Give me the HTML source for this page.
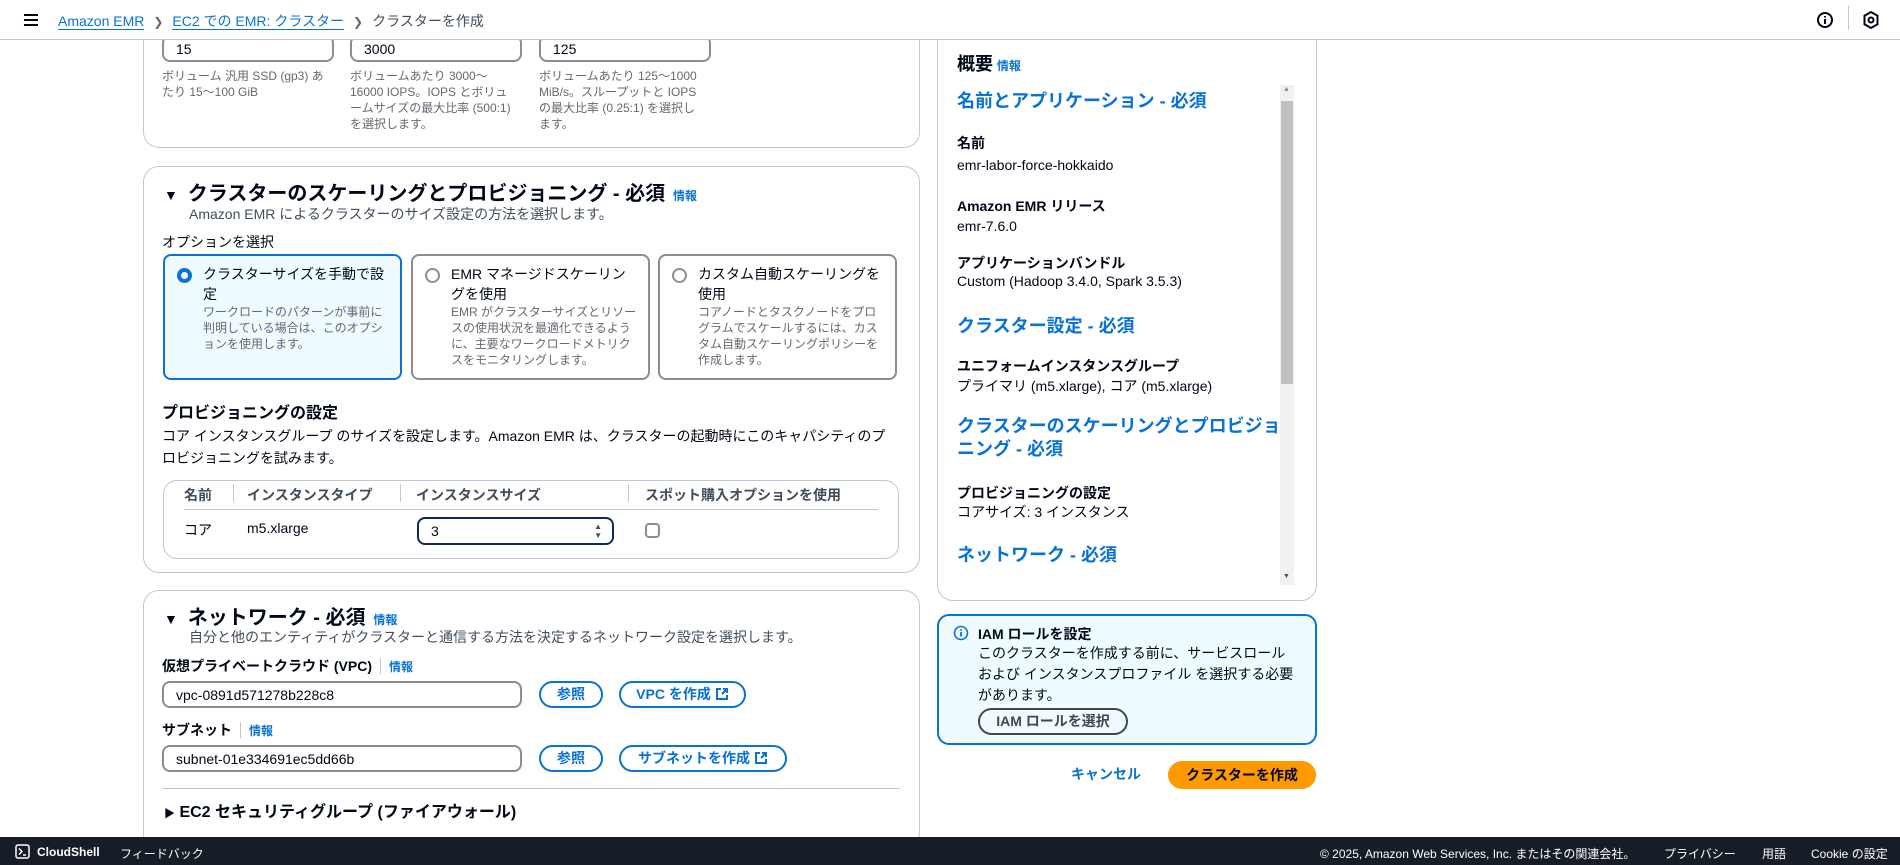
<!DOCTYPE html>
<html><head><meta charset="utf-8"><style>
*{box-sizing:border-box;margin:0;padding:0}
body{width:1900px;height:865px;overflow:hidden;background:#fff;font-family:"Liberation Sans","Noto Sans CJK JP",sans-serif;color:#000716;font-size:14px;position:relative}
.a{position:absolute;white-space:nowrap}
.blue{color:#0972d3}
.card{position:absolute;border:1px solid #c6c6cd;border-radius:16px;background:#fff}
.inp{position:absolute;border:2px solid #8c8c94;border-radius:8px;height:27px;padding:2px 12px;font-size:14px;line-height:20px}
.help{position:absolute;font-size:12px;line-height:16px;color:#656871;white-space:normal}
.h2{font-size:20px;font-weight:bold}
.info{font-size:12px;color:#0972d3;font-weight:bold}
.tile{position:absolute;top:254px;height:126px;border:2px solid #8c8c94;border-radius:8px;padding:8px 10px 0 38px;width:239px}
.tile .t{font-size:14px;line-height:20px}
.tile .d{font-size:12px;line-height:16px;color:#656871}
.radio{position:absolute;left:12px;top:12px;width:15px;height:15px;border:2px solid #8c8c94;border-radius:50%}
.btn{position:absolute;border:2px solid #0972d3;border-radius:20px;color:#0972d3;font-weight:bold;font-size:14px;height:27px;line-height:23px;text-align:center}
.sl{font-size:14px;font-weight:bold}
.sv{font-size:14px}
.sh{font-size:18px;font-weight:bold;color:#0972d3}
.ext{display:inline-block;vertical-align:-2px;margin-left:4px}
</style></head><body>
<div class="a" style="left:0;top:0;width:1900px;height:40px;border-bottom:1px solid #c6c6cd;background:#fff;z-index:5">
<div class="a" style="left:24px;top:14px;width:14px;height:2px;background:#000716;box-shadow:0 5px 0 #000716,0 10px 0 #000716"></div>
<div class="a" style="left:58px;top:11px;font-size:14px"><span class="blue" style="border-bottom:1px solid #0972d3">Amazon EMR</span><span style="color:#656871;margin:0 9px;font-size:12px">&#x276F;</span><span class="blue" style="border-bottom:1px solid #0972d3">EC2 での EMR: クラスター</span><span style="color:#656871;margin:0 9px;font-size:12px">&#x276F;</span><span style="color:#414d5c">クラスターを作成</span></div>
<svg class="a" style="left:1816px;top:11px" width="18" height="18" viewBox="0 0 18 18"><circle cx="9" cy="9" r="7" fill="none" stroke="#000716" stroke-width="2"/><path d="M9 8v5M9 5v1.5" stroke="#000716" stroke-width="2"/></svg>
<div class="a" style="left:1848px;top:6px;width:1px;height:24px;background:#c6c6cd"></div>
<svg class="a" style="left:1862px;top:10px" width="18" height="20" viewBox="0 0 18 20"><path d="M9 2l6.5 3.7v8.6L9 18l-6.5-3.7V5.7z" fill="none" stroke="#000716" stroke-width="2"/><circle cx="9" cy="10" r="2.5" fill="none" stroke="#000716" stroke-width="2"/></svg>
</div>

<div class="card" style="left:143px;top:0;width:777px;height:148px;border-top:none;border-radius:0 0 16px 16px"></div>
<div class="inp" style="left:162px;top:35px;width:172px">15</div>
<div class="inp" style="left:350px;top:35px;width:172px">3000</div>
<div class="inp" style="left:539px;top:35px;width:172px">125</div>
<div class="help" style="left:162px;top:68px;width:170px">ボリューム 汎用 SSD (gp3) あたり 15〜100 GiB</div>
<div class="help" style="left:350px;top:68px;width:166px">ボリュームあたり 3000〜<br>16000 IOPS。IOPS とボリュームサイズの最大比率 (500:1) を選択します。</div>
<div class="help" style="left:539px;top:68px;width:166px">ボリュームあたり 125〜1000 MiB/s。スループットと IOPS の最大比率 (0.25:1) を選択します。</div>

<div class="card" style="left:143px;top:166px;width:777px;height:407px"></div>
<div class="a" style="left:164px;top:177px"><span style="font-size:14px">&#9660;</span> <span class="h2" style="margin-left:6px">クラスターのスケーリングとプロビジョニング - 必須</span> <span class="info" style="margin-left:4px">情報</span></div>
<div class="a" style="left:189px;top:204px;font-size:14px;color:#414d5c">Amazon EMR によるクラスターのサイズ設定の方法を選択します。</div>
<div class="a" style="left:162px;top:232px;font-size:14px">オプションを選択</div>
<div class="tile" style="left:163px;border-color:#0972d3;background:#f0fbff"><div class="radio" style="border:4px solid #0972d3;background:#fff"></div><div class="t">クラスターサイズを手動で設定</div><div class="d">ワークロードのパターンが事前に判明している場合は、このオプションを使用します。</div></div>
<div class="tile" style="left:411px"><div class="radio"></div><div class="t">EMR マネージドスケーリングを使用</div><div class="d">EMR がクラスターサイズとリソースの使用状況を最適化できるように、主要なワークロードメトリクスをモニタリングします。</div></div>
<div class="tile" style="left:658px"><div class="radio"></div><div class="t">カスタム自動スケーリングを使用</div><div class="d">コアノードとタスクノードをプログラムでスケールするには、カスタム自動スケーリングポリシーを作成します。</div></div>
<div class="a" style="left:162px;top:399px;font-size:16px;font-weight:bold">プロビジョニングの設定</div>
<div class="a" style="left:162px;top:425px;font-size:14px;line-height:22px;white-space:normal;width:735px">コア インスタンスグループ のサイズを設定します。Amazon EMR は、クラスターの起動時にこのキャパシティのプロビジョニングを試みます。</div>
<div class="card" style="left:163px;top:480px;width:736px;height:79px;border-radius:14px"></div>
<div class="a" style="left:184px;top:485px;font-size:14px;font-weight:bold;color:#414d5c">名前</div>
<div class="a" style="left:233px;top:484px;width:1px;height:18px;background:#c6c6cd"></div>
<div class="a" style="left:247px;top:485px;font-size:14px;font-weight:bold;color:#414d5c">インスタンスタイプ</div>
<div class="a" style="left:400px;top:484px;width:1px;height:18px;background:#c6c6cd"></div>
<div class="a" style="left:416px;top:485px;font-size:14px;font-weight:bold;color:#414d5c">インスタンスサイズ</div>
<div class="a" style="left:628px;top:484px;width:1px;height:18px;background:#c6c6cd"></div>
<div class="a" style="left:645px;top:485px;font-size:14px;font-weight:bold;color:#414d5c">スポット購入オプションを使用</div>
<div class="a" style="left:184px;top:509px;width:694px;height:1px;background:#c6c6cd"></div>
<div class="a" style="left:184px;top:520px">コア</div>
<div class="a" style="left:247px;top:520px">m5.xlarge</div>
<div class="inp" style="left:417px;top:517px;width:197px;border-color:#0f2a55;border-width:2px;height:28px">3<span style="position:absolute;right:10px;top:3px;font-size:8px;line-height:9px;color:#414d5c">▲<br>▼</span></div>
<div class="a" style="left:645px;top:523px;width:15px;height:15px;border:2px solid #8c8c94;border-radius:4px"></div>

<div class="card" style="left:143px;top:590px;width:777px;height:260px"></div>
<div class="a" style="left:164px;top:601px"><span style="font-size:14px">&#9660;</span> <span class="h2" style="margin-left:6px">ネットワーク - 必須</span> <span class="info" style="margin-left:4px">情報</span></div>
<div class="a" style="left:189px;top:627px;color:#414d5c">自分と他のエンティティがクラスターと通信する方法を決定するネットワーク設定を選択します。</div>
<div class="a" style="left:162px;top:656px;font-weight:bold">仮想プライベートクラウド (VPC)<span style="display:inline-block;width:1px;height:16px;background:#c6c6cd;margin:0 8px;vertical-align:-3px"></span><span class="info">情報</span></div>
<div class="inp" style="left:162px;top:681px;width:360px">vpc-0891d571278b228c8</div>
<div class="btn" style="left:539px;top:681px;width:64px">参照</div>
<div class="btn" style="left:619px;top:681px;width:127px">VPC を作成<svg class="ext" width="14" height="14" viewBox="0 0 14 14"><path d="M6 2H2v10h10V8M8 2h4v4M12 2L7 7" fill="none" stroke="#0972d3" stroke-width="2"/></svg></div>
<div class="a" style="left:162px;top:720px;font-weight:bold">サブネット<span style="display:inline-block;width:1px;height:16px;background:#c6c6cd;margin:0 8px;vertical-align:-3px"></span><span class="info">情報</span></div>
<div class="inp" style="left:162px;top:745px;width:360px">subnet-01e334691ec5dd66b</div>
<div class="btn" style="left:539px;top:745px;width:64px">参照</div>
<div class="btn" style="left:619px;top:745px;width:168px">サブネットを作成<svg class="ext" width="14" height="14" viewBox="0 0 14 14"><path d="M6 2H2v10h10V8M8 2h4v4M12 2L7 7" fill="none" stroke="#0972d3" stroke-width="2"/></svg></div>
<div class="a" style="left:162px;top:788px;width:738px;height:1px;background:#c6c6cd"></div>
<div class="a" style="left:164px;top:798px;font-weight:bold;font-size:16px"><span style="font-size:11px">&#9654;</span> EC2 セキュリティグループ (ファイアウォール)</div>

<div class="card" style="left:937px;top:24px;width:380px;height:577px"></div>
<div class="a" style="left:957px;top:50px"><span style="font-size:18px;font-weight:bold">概要</span> <span class="info">情報</span></div>
<div class="a" style="left:1280px;top:85px;width:14px;height:500px;background:#f1f1f1"></div>
<div class="a" style="left:1281px;top:101px;width:12px;height:283px;background:#c1c1c1"></div>
<div class="a" style="left:1283px;top:86px;font-size:7px;color:#888">▲</div>
<div class="a" style="left:1283px;top:573px;font-size:7px;color:#505050">▼</div>
<div class="a sh" style="left:957px;top:87px">名前とアプリケーション - 必須</div>
<div class="a sl" style="left:957px;top:133px">名前</div>
<div class="a sv" style="left:957px;top:157px">emr-labor-force-hokkaido</div>
<div class="a sl" style="left:957px;top:196px">Amazon EMR リリース</div>
<div class="a sv" style="left:957px;top:218px">emr-7.6.0</div>
<div class="a sl" style="left:957px;top:253px">アプリケーションバンドル</div>
<div class="a sv" style="left:957px;top:273px">Custom (Hadoop 3.4.0, Spark 3.5.3)</div>
<div class="a sh" style="left:957px;top:312px">クラスター設定 - 必須</div>
<div class="a sl" style="left:957px;top:356px">ユニフォームインスタンスグループ</div>
<div class="a sv" style="left:957px;top:376px">プライマリ (m5.xlarge), コア (m5.xlarge)</div>
<div class="a sh" style="left:957px;top:415px;line-height:23px">クラスターのスケーリングとプロビジョ<br>ニング - 必須</div>
<div class="a sl" style="left:957px;top:483px">プロビジョニングの設定</div>
<div class="a sv" style="left:957px;top:502px">コアサイズ: 3 インスタンス</div>
<div class="a sh" style="left:957px;top:541px">ネットワーク - 必須</div>

<div class="a" style="left:937px;top:614px;width:380px;height:131px;border:2px solid #0972d3;border-radius:12px;background:#f0fbff"></div>
<svg class="a" style="left:953px;top:625px" width="16" height="16" viewBox="0 0 16 16"><circle cx="8" cy="8" r="6.5" fill="none" stroke="#0972d3" stroke-width="1.6"/><path d="M8 7v4.5M8 4.3v1.5" stroke="#0972d3" stroke-width="1.8"/></svg>
<div class="a" style="left:978px;top:624px;font-weight:bold;font-size:14px">IAM ロールを設定</div>
<div class="a" style="left:978px;top:643px;font-size:14px;line-height:21px;white-space:normal;width:320px">このクラスターを作成する前に、サービスロール および インスタンスプロファイル を選択する必要があります。</div>
<div class="a" style="left:978px;top:708px;width:150px;height:27px;border:2px solid #424650;border-radius:20px;text-align:center;line-height:23px;font-weight:bold;color:#424650">IAM ロールを選択</div>
<div class="a" style="left:1071px;top:764px;font-weight:bold;color:#0972d3">キャンセル</div>
<div class="a" style="left:1168px;top:761px;width:148px;height:28px;border-radius:20px;background:#ff9900;text-align:center;line-height:28px;font-weight:bold">クラスターを作成</div>

<div class="a" style="left:0;top:837px;width:1900px;height:28px;background:#161d26;color:#fff;font-size:12px">
<svg class="a" style="left:15px;top:7px" width="15" height="15" viewBox="0 0 15 15"><rect x="1" y="1" width="13" height="13" rx="2" fill="none" stroke="#fff" stroke-width="1.5"/><path d="M4 4.5l3 3-3 3M8 11h3" stroke="#fff" stroke-width="1.5" fill="none"/></svg>
<div class="a" style="left:37px;top:8px;font-weight:bold">CloudShell</div>
<div class="a" style="left:120px;top:8px">フィードバック</div>
<div class="a" style="left:1320px;top:8px">© 2025, Amazon Web Services, Inc. またはその関連会社。</div>
<div class="a" style="left:1664px;top:8px">プライバシー</div>
<div class="a" style="left:1762px;top:8px">用語</div>
<div class="a" style="left:1811px;top:8px">Cookie の設定</div>
</div>
</body></html>
